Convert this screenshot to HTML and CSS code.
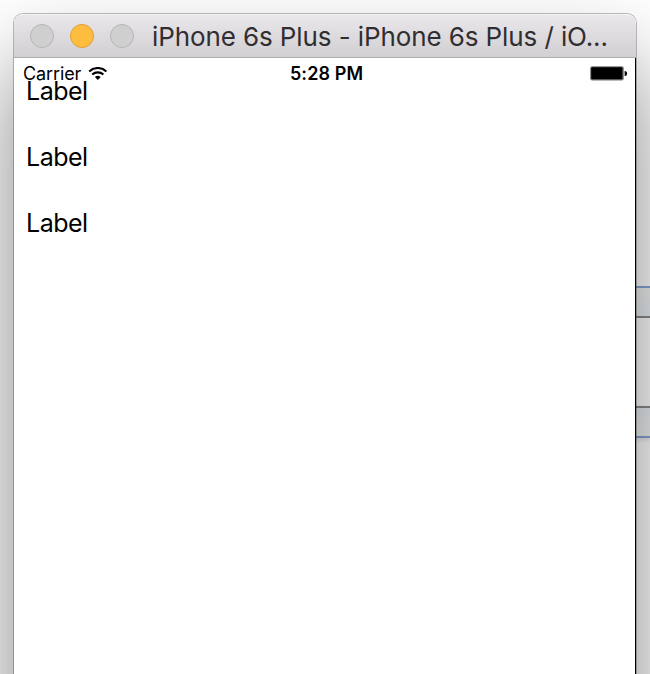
FILE: index.html
```html
<!DOCTYPE html>
<html lang="en">
<head>
<meta charset="utf-8">
<title>iPhone 6s Plus</title>
<link rel="stylesheet" href="styles.css">
</head>
<body>
<div class="desktop">
  <div class="pane pane-top"></div>
  <div class="pane pane-bottom"></div>
  <main class="window">
    <header class="titlebar">
      <span class="light"></span>
      <span class="light minimize"></span>
      <span class="light"></span>
      <h1 class="title">iPhone 6s Plus - iPhone 6s Plus / iO...</h1>
    </header>
    <section class="screen">
      <div class="status">
        <div class="carrier">
          <span class="carrier-name">Carrier</span>
          <svg class="wifi" width="20" height="14" viewBox="0 0 20 14">
            <path d="M1.2 4.4a12.6 12.6 0 0 1 17.2 0M4.2 7.6a8.2 8.2 0 0 1 11.2 0" fill="none" stroke="#000" stroke-width="2.1"/>
            <path d="M6.9 10.1a4.4 4.4 0 0 1 5.8 0L9.8 13z"/>
          </svg>
        </div>
        <time class="time">5:28 PM</time>
        <div class="power">
          <svg width="38" height="16" viewBox="0 0 38 16">
            <rect x=".2" y=".2" width="33.6" height="14.4" rx="2" fill="#777"/>
            <rect x="1.2" y="1.2" width="31.2" height="12" rx="1"/>
            <path d="M34.6 4.9a2.5 2.5 0 0 1 0 5z"/>
          </svg>
        </div>
      </div>
      <div class="labels">
        <p class="label">Label</p>
        <p class="label">Label</p>
        <p class="label">Label</p>
      </div>
    </section>
  </main>
</div>
</body>
</html>
```
FILE: styles.css
```css
* { box-sizing: border-box; }
body {
  margin: 0;
  overflow: hidden;
  background: #fff;
  font-family: Inter, "Liberation Sans", sans-serif;
  color: #000;
}
.desktop {
  position: relative;
  height: 674px;
  overflow: hidden;
  padding: 14px 14px 0;
}
/* Panels of another window showing behind the simulator */
.pane {
  position: absolute;
  right: 0;
  width: 40px;
}
.pane-top {
  top: 286px;
  height: 32px;
  background: linear-gradient(#f2f2f2, #e8eff3);
  border-top: 2px solid #88a5d8;
  border-bottom: 2px solid #8c8c8c;
}
.pane-bottom {
  top: 406px;
  height: 32px;
  background: linear-gradient(#e8eff3, #f2f2f2);
  border-top: 2px solid #8c8c8c;
  border-bottom: 2px solid #88a5d8;
  box-shadow: 0 2px 4px rgba(0, 0, 0, .12);
}
.window {
  position: relative;
  height: 1000px;
  border-radius: 9px 9px 0 0;
  box-shadow: 0 0 0 1px rgba(0, 0, 0, .25), 0 50px 90px rgba(0, 0, 0, .48);
}
.titlebar {
  display: flex;
  align-items: center;
  height: 44px;
  padding-left: 16px;
  border-radius: 9px 9px 0 0;
  background: linear-gradient(#eae7ea, #d2cfd2);
  border-top: 1px solid #f5f3f5;
  border-bottom: 1px solid #b0adb0;
}
.light {
  flex: none;
  width: 24px;
  height: 24px;
  margin-right: 16px;
  border: 1px solid #b5b5b5;
  border-radius: 50%;
  background: #cfcfcf;
}
.minimize {
  border-color: #df9e34;
  background: #ffbd40;
}
.title {
  margin: 2px 0 0 2px;
  font-size: 26px;
  font-weight: 400;
  line-height: 32px;
  letter-spacing: -.1px;
  white-space: nowrap;
  color: #302e31;
}
.screen {
  height: 956px;
  background: #fff;
  border-right: 1px solid #000;
}
.status {
  display: grid;
  grid-template-columns: 1fr auto 1fr;
  align-items: center;
  height: 16px;
  padding: 0 7px 0 9px;
  transform: translateY(8px);
}
.carrier {
  display: flex;
  align-items: center;
  gap: 7px;
  font-size: 18px;
  line-height: 16px;
  letter-spacing: -.1px;
}
.time {
  margin-left: 2px;
  font-size: 18px;
  font-weight: 600;
  line-height: 16px;
  letter-spacing: .1px;
}
.power {
  display: flex;
  justify-content: flex-end;
}
.labels {
  display: grid;
  gap: 36px;
  padding: 2px 0 0 12px;
}
.label {
  margin: 0;
  font-size: 25px;
  line-height: 30px;
  letter-spacing: -.5px;
}
```
